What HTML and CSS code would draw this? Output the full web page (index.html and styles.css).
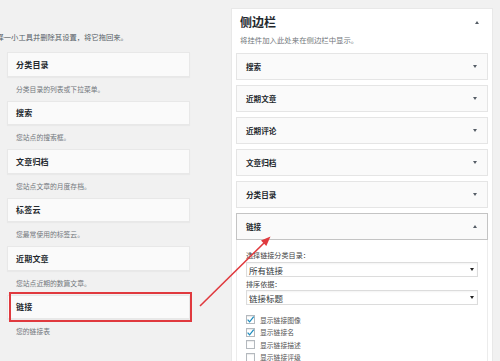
FILE: index.html
```html
<!DOCTYPE html>
<html lang="zh-CN">
<head>
<meta charset="utf-8">
<title>小工具</title>
<link rel="stylesheet" href="styles.css">
</head>
<body>
<div class="page">
  <div class="left">
    <p class="intro">择一小工具并删除其设置，将它拖回来。</p>
    <div class="widget"><span class="w-title">分类目录</span></div>
    <p class="desc">分类目录的列表或下拉菜单。</p>
    <div class="widget"><span class="w-title">搜索</span></div>
    <p class="desc">您站点的搜索框。</p>
    <div class="widget"><span class="w-title">文章归档</span></div>
    <p class="desc">您站点文章的月度存档。</p>
    <div class="widget"><span class="w-title">标签云</span></div>
    <p class="desc">您最常使用的标签云。</p>
    <div class="widget"><span class="w-title">近期文章</span></div>
    <p class="desc">您站点近期的数篇文章。</p>
    <div class="widget highlight"><span class="w-title">链接</span></div>
    <p class="desc">您的链接表</p>
  </div>

  <div class="sidebar">
    <div class="sb-head">
      <h2 class="sb-title">侧边栏</h2>
      <span class="tri tri-up"></span>
    </div>
    <p class="sb-desc">将挂件加入此处来在侧边栏中显示。</p>
    <div class="rows">
      <div class="row"><span class="r-title">搜索</span><span class="tri tri-down"></span></div>
      <div class="row"><span class="r-title">近期文章</span><span class="tri tri-down"></span></div>
      <div class="row"><span class="r-title">近期评论</span><span class="tri tri-down"></span></div>
      <div class="row"><span class="r-title">文章归档</span><span class="tri tri-down"></span></div>
      <div class="row"><span class="r-title">分类目录</span><span class="tri tri-down"></span></div>
      <div class="open-widget">
        <div class="row row-open"><span class="r-title">链接</span><span class="tri tri-up"></span></div>
        <div class="inside">
          <p class="f-label">选择链接分类目录：</p>
          <div class="select"><span>所有链接</span><span class="sel-tri"></span></div>
          <p class="f-label f-label2">排序依据：</p>
          <div class="select select2"><span>链接标题</span><span class="sel-tri"></span></div>
          <div class="checks">
            <div class="check"><span class="box"><svg viewBox="0 0 10 10" width="9" height="9"><path d="M1.8 5.2 L4 7.6 L8.6 1.8" fill="none" stroke="#1e8cbe" stroke-width="1.4"/></svg></span><span class="c-label">显示链接图像</span></div>
            <div class="check"><span class="box"><svg viewBox="0 0 10 10" width="9" height="9"><path d="M1.8 5.2 L4 7.6 L8.6 1.8" fill="none" stroke="#1e8cbe" stroke-width="1.4"/></svg></span><span class="c-label">显示链接名</span></div>
            <div class="check"><span class="box"></span><span class="c-label">显示链接描述</span></div>
            <div class="check"><span class="box"></span><span class="c-label">显示链接评级</span></div>
          </div>
        </div>
      </div>
    </div>
  </div>

  <svg class="arrow" width="500" height="361" viewBox="0 0 500 361">
    <line x1="200" y1="306" x2="265" y2="242" stroke="#e0393e" stroke-width="1.6"/>
    <polygon points="270.5,236.5 261,240.6 266.3,245.9" fill="#e0393e"/>
  </svg>
</div>
</body>
</html>
```
FILE: styles.css
```css
html, body {
  margin: 0;
  padding: 0;
  background: #f1f1f1;
  overflow: hidden;
}
body {
  width: 500px;
  height: 361px;
  font-family: "Noto Sans CJK SC", "Noto Sans", sans-serif;
  color: #23282d;
}
p { margin: 0; }

.page {
  position: relative;
  display: flex;
  align-items: flex-start;
  width: 500px;
  height: 361px;
  overflow: hidden;
}

/* left column */
.left {
  width: 183px;
  padding: 32px 0 0 7px;
  flex: none;
}
.intro {
  font-size: 7.3px;
  line-height: 10px;
  height: 10px;
  color: #555d66;
  margin: 0 0 10px -10.5px;
  white-space: nowrap;
}
.widget {
  position: relative;
  box-sizing: border-box;
  height: 24.5px;
  background: #fafafa;
  border: 1px solid #e8e8e8;
  box-shadow: 0 1px 1px rgba(0,0,0,0.03);
  display: flex;
  align-items: center;
  padding-left: 8px;
}
.w-title {
  font-size: 8px;
  font-weight: 700;
  color: #23282d;
  letter-spacing: 0.2px;
}
.desc {
  height: 24px;
  line-height: 24px;
  font-size: 6.8px;
  color: #72777c;
  padding-left: 9px;
  white-space: nowrap;
}
.highlight::after {
  content: "";
  position: absolute;
  left: 1px;
  right: -3px;
  top: -3.5px;
  bottom: -3.5px;
  border: 2px solid #e0393e;
}

/* sidebar panel */
.sidebar {
  flex: none;
  margin-left: 41px;
  margin-top: 8px;
  width: 262px;
  min-height: 400px;
  box-sizing: border-box;
  background: #fff;
  border: 1px solid #e8e8e8;
  padding: 5px 4px 0 4px;
}
.sb-head {
  display: flex;
  align-items: center;
  justify-content: space-between;
  height: 16px;
  padding: 0 9px 0 4px;
}
.sb-title {
  margin: 0;
  font-size: 12px;
  line-height: 16px;
  font-weight: 600;
  color: #23282d;
}
.sb-desc {
  font-size: 7.4px;
  line-height: 10px;
  height: 10px;
  margin: 5px 0 8px 0;
  padding-left: 4px;
  color: #72777c;
  white-space: nowrap;
}
.rows {
  display: flex;
  flex-direction: column;
  gap: 5px;
}
.row {
  box-sizing: border-box;
  height: 27px;
  background: #fafafa;
  border: 1px solid #e5e5e5;
  display: flex;
  align-items: center;
  justify-content: space-between;
  padding: 0 10px 0 9px;
}
.r-title {
  font-size: 7.6px;
  font-weight: 700;
  color: #23282d;
}
.row-open {
  border-color: #c4c4c4;
}
.tri {
  width: 0;
  height: 0;
  border-left: 2.5px solid transparent;
  border-right: 2.5px solid transparent;
}
.tri-down { border-top: 3.5px solid #555d66; }
.tri-up { border-bottom: 3.5px solid #555d66; }

.inside {
  border: 1px solid #ececec;
  border-top: none;
  padding: 10px 9px 20px 9px;
}
.f-label {
  font-size: 7.1px;
  line-height: 10px;
  height: 10px;
  color: #444;
  white-space: nowrap;
}
.f-label2 { margin-top: 2px; }
.select {
  box-sizing: border-box;
  height: 15px;
  margin-top: 2px;
  border: 1px solid #dcdcdc;
  box-shadow: inset 0 1px 2px rgba(0,0,0,0.05);
  background: #fff;
  display: flex;
  align-items: center;
  justify-content: space-between;
  padding: 0 3px 0 2px;
  font-size: 8.5px;
  color: #32373c;
}
.select2 { margin-top: 1px; }
.sel-tri {
  width: 0;
  height: 0;
  border-left: 2px solid transparent;
  border-right: 2px solid transparent;
  border-top: 3px solid #222;
}
.checks {
  margin-top: 8.8px;
  display: flex;
  flex-direction: column;
}
.check {
  height: 12.4px;
  display: flex;
  align-items: center;
}
.box {
  box-sizing: border-box;
  width: 9px;
  height: 9px;
  border: 1px solid #b4b9be;
  background: #fff;
  box-shadow: inset 0 1px 1px rgba(0,0,0,0.08);
  display: flex;
  align-items: center;
  justify-content: center;
  overflow: visible;
}
.box svg { flex: none; }
.c-label {
  margin-left: 5px;
  font-size: 6.8px;
  color: #555;
  white-space: nowrap;
}

.arrow {
  position: absolute;
  left: 0;
  top: 0;
  pointer-events: none;
}
```
